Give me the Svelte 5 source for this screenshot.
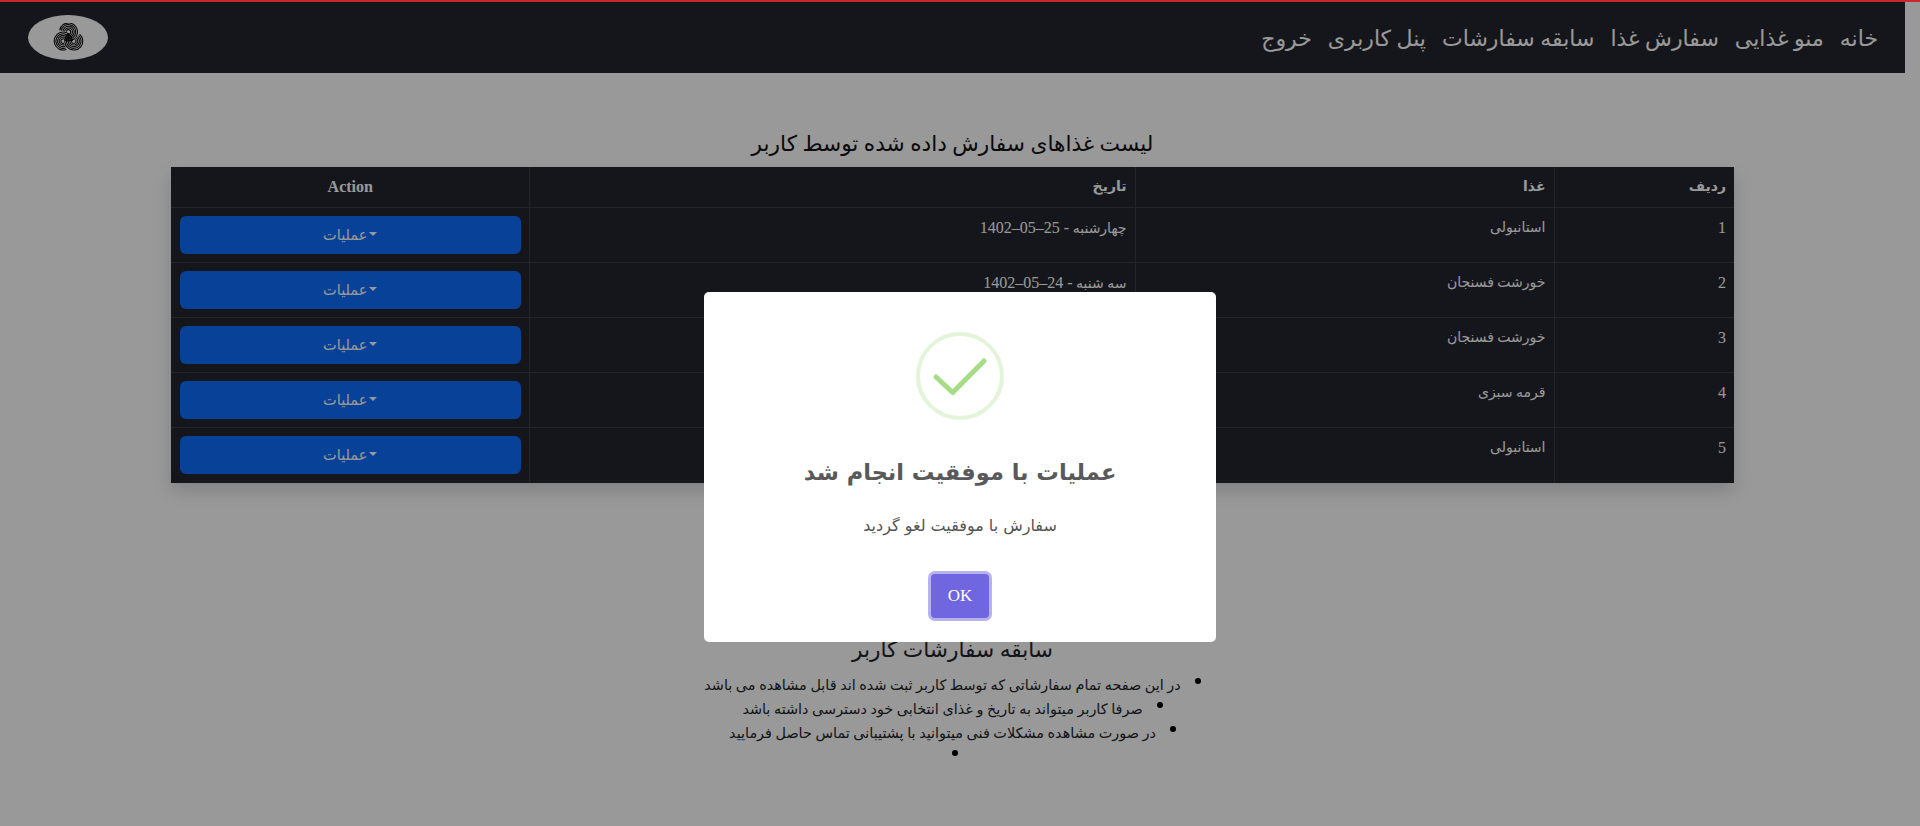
<script>
  const links = ['خانه', 'منو غذایی', 'سفارش غذا', 'سابقه سفارشات', 'پنل کاربری', 'خروج'];
  const rows = [
    { id: 1, food: 'استانبولی', day: 'چهارشنبه', date: '25–05–1402' },
    { id: 2, food: 'خورشت فسنجان', day: 'سه شنبه', date: '24–05–1402' },
    { id: 3, food: 'خورشت فسنجان', day: 'سه شنبه', date: '24–05–1402' },
    { id: 4, food: 'قرمه سبزی', day: 'دوشنبه', date: '23–05–1402' },
    { id: 5, food: 'استانبولی', day: 'یکشنبه', date: '22–05–1402' }
  ];
  const notes = [
    'در این صفحه تمام سفارشاتی که توسط کاربر ثبت شده اند قابل مشاهده می باشد',
    'صرفا کاربر میتواند به تاریخ و غذای انتخابی خود دسترسی داشته باشد',
    'در صورت مشاهده مشکلات فنی میتوانید با پشتیبانی تماس حاصل فرمایید',
    ''
  ];
  const lobes = [0, 120, 240];
  const radii = [1.800, 3.600, 5.400, 7.200, 9];
</script>

<div class="topline"></div>
<div class="page">
  <nav>
    <ul class="links">
      {#each links as link}
        <li>{link}</li>
      {/each}
    </ul>
    <div class="logo">
      <svg width="31" height="30" viewBox="0 0 32 32" fill="none" stroke="#050505" stroke-width="1.100">
        {#each lobes as angle}
          <g transform="rotate({angle} 16 16)">
            {#each radii as r}
              <circle cx="16" cy="9.500" r={r + 0.6} pathLength="100" stroke-dasharray="80 20" transform="rotate(-170 16 9.500)" />
            {/each}
          </g>
        {/each}
      </svg>
    </div>
  </nav>

  <main>
    <h4 class="list-title">لیست غذاهای سفارش داده شده توسط کاربر</h4>
    <table>
      <colgroup>
        <col class="c-id" /><col class="c-food" /><col class="c-date" /><col class="c-act" />
      </colgroup>
      <thead>
        <tr><th>ردیف</th><th>غذا</th><th>تاریخ</th><th class="center">Action</th></tr>
      </thead>
      <tbody>
        {#each rows as row}
          <tr>
            <td class="num">{row.id}</td>
            <td>{row.food}</td>
            <td>{row.day} <span class="digits">- {row.date}</span></td>
            <td><button class="action"><span class="caret"></span>عملیات</button></td>
          </tr>
        {/each}
      </tbody>
    </table>

    <section class="history">
      <h4>سابقه سفارشات کاربر</h4>
      <ul>
        {#each notes as note}
          <li>{note}</li>
        {/each}
      </ul>
    </section>
  </main>
</div>

<div class="backdrop">
  <div class="modal">
    <svg class="success" width="88" height="88" viewBox="0 0 88 88" fill="none">
      <circle cx="44" cy="44" r="42" stroke="#a5dc86" stroke-opacity="0.3" stroke-width="4" />
      <path d="M20 45 L36.700 60.500 L68 29" stroke="#a5dc86" stroke-width="5" stroke-linecap="round" stroke-linejoin="round" />
    </svg>
    <h2>عملیات با موفقیت انجام شد</h2>
    <p>سفارش با موفقیت لغو گردید</p>
    <button class="ok">OK</button>
  </div>
</div>

<style>
  :global(body) {
    margin: 0;
    background: #fff;
    overflow: hidden;
  }
  .topline {
    position: relative;
    z-index: 20;
    height: 2px;
    background: #c8282f;
  }
  .page {
    width: 1905px;
    height: 824px;
    font-family: "Liberation Serif", "DejaVu Sans", serif;
  }
  nav {
    height: 71px;
    background: #23262d;
    display: flex;
    direction: rtl;
    align-items: center;
    justify-content: space-between;
    padding: 0 27px 0 28px;
    box-sizing: border-box;
  }
  .links {
    display: flex;
    gap: 16px;
    list-style: none;
    margin: 0;
    padding: 2px 0 0;
    font-size: 22px;
    line-height: 30px;
    color: #fff;
  }
  .logo {
    width: 80px;
    height: 45px;
    border-radius: 50%;
    background: #fff;
    display: flex;
    align-items: center;
    justify-content: center;
  }
  main {
    direction: rtl;
    width: 1563px;
    margin: 0 auto;
    padding-top: 24px;
  }
  h4 {
    margin: 0;
    text-align: center;
    font-weight: 400;
    font-size: 21.700px;
    line-height: 32px;
    color: #212529;
  }
  .list-title {
    padding: 31px 0 7px;
    color: #111;
  }
  table {
    width: 100%;
    table-layout: fixed;
    border-collapse: collapse;
    background: #23262d;
    color: #fff;
    font-size: 14px;
    box-shadow: 0 8px 16px rgba(0, 0, 0, 0.15);
  }
  .c-id { width: 180px; }
  .c-food { width: 419px; }
  .c-date { width: 606px; }
  .c-act { width: 358px; }
  th, td {
    border: 1px solid #3a3c42;
    padding: 8px;
    text-align: right;
    vertical-align: top;
    line-height: 24px;
  }
  .num, .center, .digits { font-size: 16px; }
  .digits { letter-spacing: 0.4px; }
  th { font-weight: 700; }
  tr > :first-child { border-right: 0; }
  tr > :last-child { border-left: 0; padding-left: 9px; }
  thead tr > * { border-top: 0; }
  tbody tr:last-child > * { border-bottom: 0; padding-bottom: 9px; }
  th.center { text-align: center; }
  .action {
    width: 100%;
    height: 38px;
    border: 0;
    border-radius: 6px;
    background: #0d6efd;
    color: #fff;
    font: 400 14.500px "Liberation Serif", "DejaVu Sans", serif;
    padding: 0;
    display: block;
  }
  .caret {
    display: inline-block;
    vertical-align: 4px;
    margin-left: 2px;
    border-top: 4px solid #fff;
    border-left: 4px solid transparent;
    border-right: 4px solid transparent;
  }
  .history {
    padding-top: 151px;
  }
  .history ul {
    list-style: none;
    text-align: center;
    margin: 7px 0 0;
    padding: 0;
    font-size: 14.400px;
    line-height: 24px;
    color: #212529;
  }
  .history li::before {
    content: "";
    display: inline-block;
    width: 6px;
    height: 6px;
    border-radius: 50%;
    background: #000;
    margin-left: 14px;
    vertical-align: 6px;
  }
  .history li:empty::before {
    margin-left: 5px;
  }
  .backdrop {
    position: fixed;
    inset: 0;
    z-index: 10;
    background: rgba(0, 0, 0, 0.4);
  }
  .modal {
    position: absolute;
    left: 704px;
    top: 292px;
    width: 512px;
    height: 350px;
    background: #fff;
    border-radius: 5px;
    direction: rtl;
    display: flex;
    flex-direction: column;
    align-items: center;
    font-family: "DejaVu Sans", serif;
  }
  .success {
    margin-top: 40px;
  }
  .modal h2 {
    margin: 33px 0 0;
    font-size: 22.500px;
    line-height: 38px;
    font-weight: 700;
    color: #595959;
  }
  .modal p {
    margin: 22px 0 0;
    font-size: 16px;
    line-height: 26px;
    color: #545454;
  }
  .ok {
    margin-top: 35px;
    width: 58px;
    height: 44px;
    border: 0;
    border-radius: 4px;
    background: #7066e0;
    color: #fff;
    font: 400 17px "Liberation Serif", serif;
    box-shadow: 0 0 0 3px rgba(112, 102, 224, 0.5);
  }
</style>
